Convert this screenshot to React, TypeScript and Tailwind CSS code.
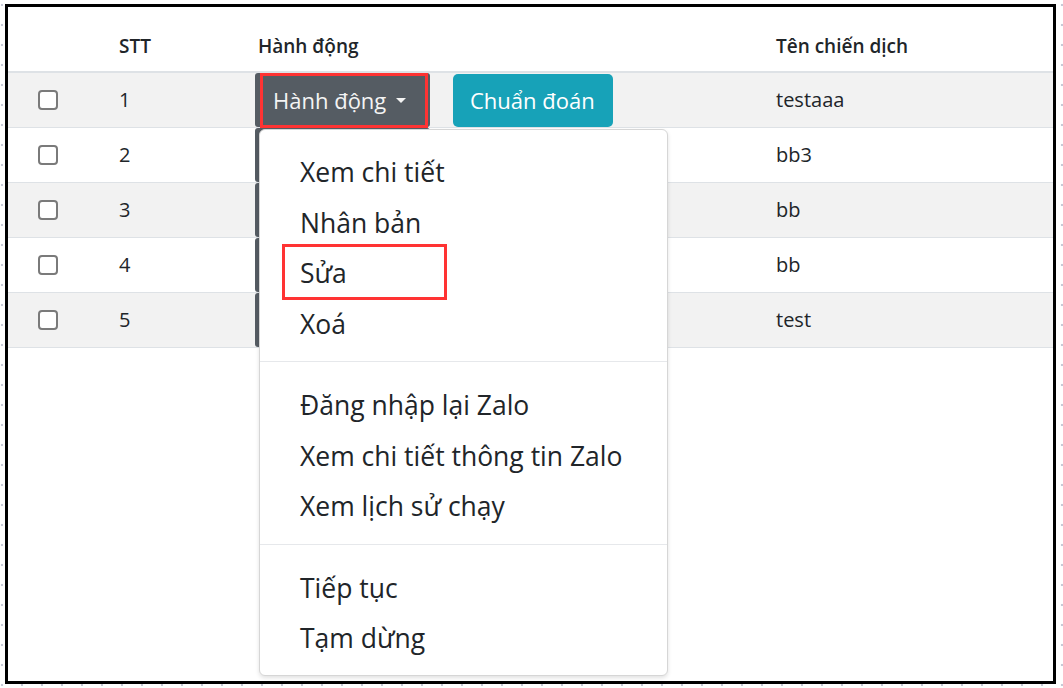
// ── IMPORTS ───────────────────────────────────────────────────────────────────
import React from "react";

// ── CONSTANTS ─────────────────────────────────────────────────────────────────
const ROWS = [
  { stt: 1, name: "testaaa" },
  { stt: 2, name: "bb3" },
  { stt: 3, name: "bb" },
  { stt: 4, name: "bb" },
  { stt: 5, name: "test" },
];

const MENU_GROUPS = [
  ["Xem chi tiết", "Nhân bản", "Sửa", "Xoá"],
  ["Đăng nhập lại Zalo", "Xem chi tiết thông tin Zalo", "Xem lịch sử chạy"],
  ["Tiếp tục", "Tạm dừng"],
];

// ── COMPONENT ─────────────────────────────────────────────────────────────────
export default function App() {
  return (
    <div
      className="w-[1063px] h-[688px] overflow-hidden bg-white bg-[radial-gradient(circle,#c6c9d6_1px,transparent_1.6px)] bg-[length:20px_20px] bg-[position:-8px_-5px] pt-[4px] pl-[5px] text-[#212529]"
      style={{ fontFamily: '"Open Sans", "Noto Sans", sans-serif' }}
    >
      {/* Framed screenshot */}
      <div className="relative w-[1051px] h-[680px] border-[3px] border-black bg-white">
        {/* Header */}
        <div className="flex h-[66px] pt-[14px] items-center border-b-2 border-[#dee2e6] text-[19px] font-semibold leading-[28px]">
          <div className="w-[103px]" />
          <div className="w-[139px] pl-2">STT</div>
          <div className="w-[518px] pl-2">Hành động</div>
          <div className="flex-1 pl-2">Tên chiến dịch</div>
        </div>

        {/* Rows */}
        {ROWS.map((row, i) => (
          <div
            key={row.stt}
            className={`flex h-[55px] items-center border-b border-[#dee2e6] text-[20px] leading-[28px] ${
              i % 2 === 0 ? "bg-[#f2f2f2]" : "bg-white"
            }`}
          >
            <div className="w-[103px] pl-[30px]">
              <span className="block w-[20px] h-[20px] rounded-[4px] border-2 border-[#7a7a7a] bg-white" />
            </div>
            <div className="w-[139px] pl-2">{row.stt}</div>
            <div className="w-[518px] pl-[5px] flex items-center gap-[23px]">
              <div className="relative">
                <button className="h-[54px] w-[175px] flex items-center gap-[10px] pl-[18px] rounded-[3px] bg-[#555c63] text-[#f4f4f4] text-[22px]">
                  {i === 0 && "Hành động"}
                  {i === 0 && (
                    <span className="w-0 h-0 border-x-[5px] border-t-[5px] border-x-transparent border-t-[#f4f4f4]" />
                  )}
                </button>
                {i === 0 && (
                  <span className="absolute left-[5px] top-0 w-[168px] h-[55px] border-[3px] border-[#ff3333]" />
                )}
              </div>
              {/* rows below are covered by the open menu, only edges show */}
              <button className="h-[53px] w-[160px] flex items-center pl-[17px] rounded-[5px] bg-[#17a2b8] text-white text-[22px]">
                {i === 0 && "Chuẩn đoán"}
              </button>
            </div>
            <div className="flex-1 pl-2">{row.name}</div>
          </div>
        ))}

        {/* Dropdown menu (open on row 1) */}
        <div className="absolute left-[251px] top-[122px] w-[409px] h-[547px] rounded-[6px] border border-[#d6d6d6] bg-white shadow-[0_2px_4px_rgba(0,0,0,0.12)] pt-[17px] text-[26.5px] leading-[34px]">
          {MENU_GROUPS.map((group, gi) => (
            <div key={gi}>
              {gi > 0 && <div className="mt-[12px] mb-[18px] h-px bg-[#e6e8eb]" />}
              {group.map((label) => (
                <div key={label} className="relative h-[50.5px] flex items-center pl-[40px] whitespace-nowrap">
                  {label}
                  {label === "Sửa" && (
                    <span className="absolute left-[22px] top-[-4px] w-[165px] h-[56px] border-[3px] border-[#ff3333]" />
                  )}
                </div>
              ))}
            </div>
          ))}
        </div>
      </div>
    </div>
  );
}
